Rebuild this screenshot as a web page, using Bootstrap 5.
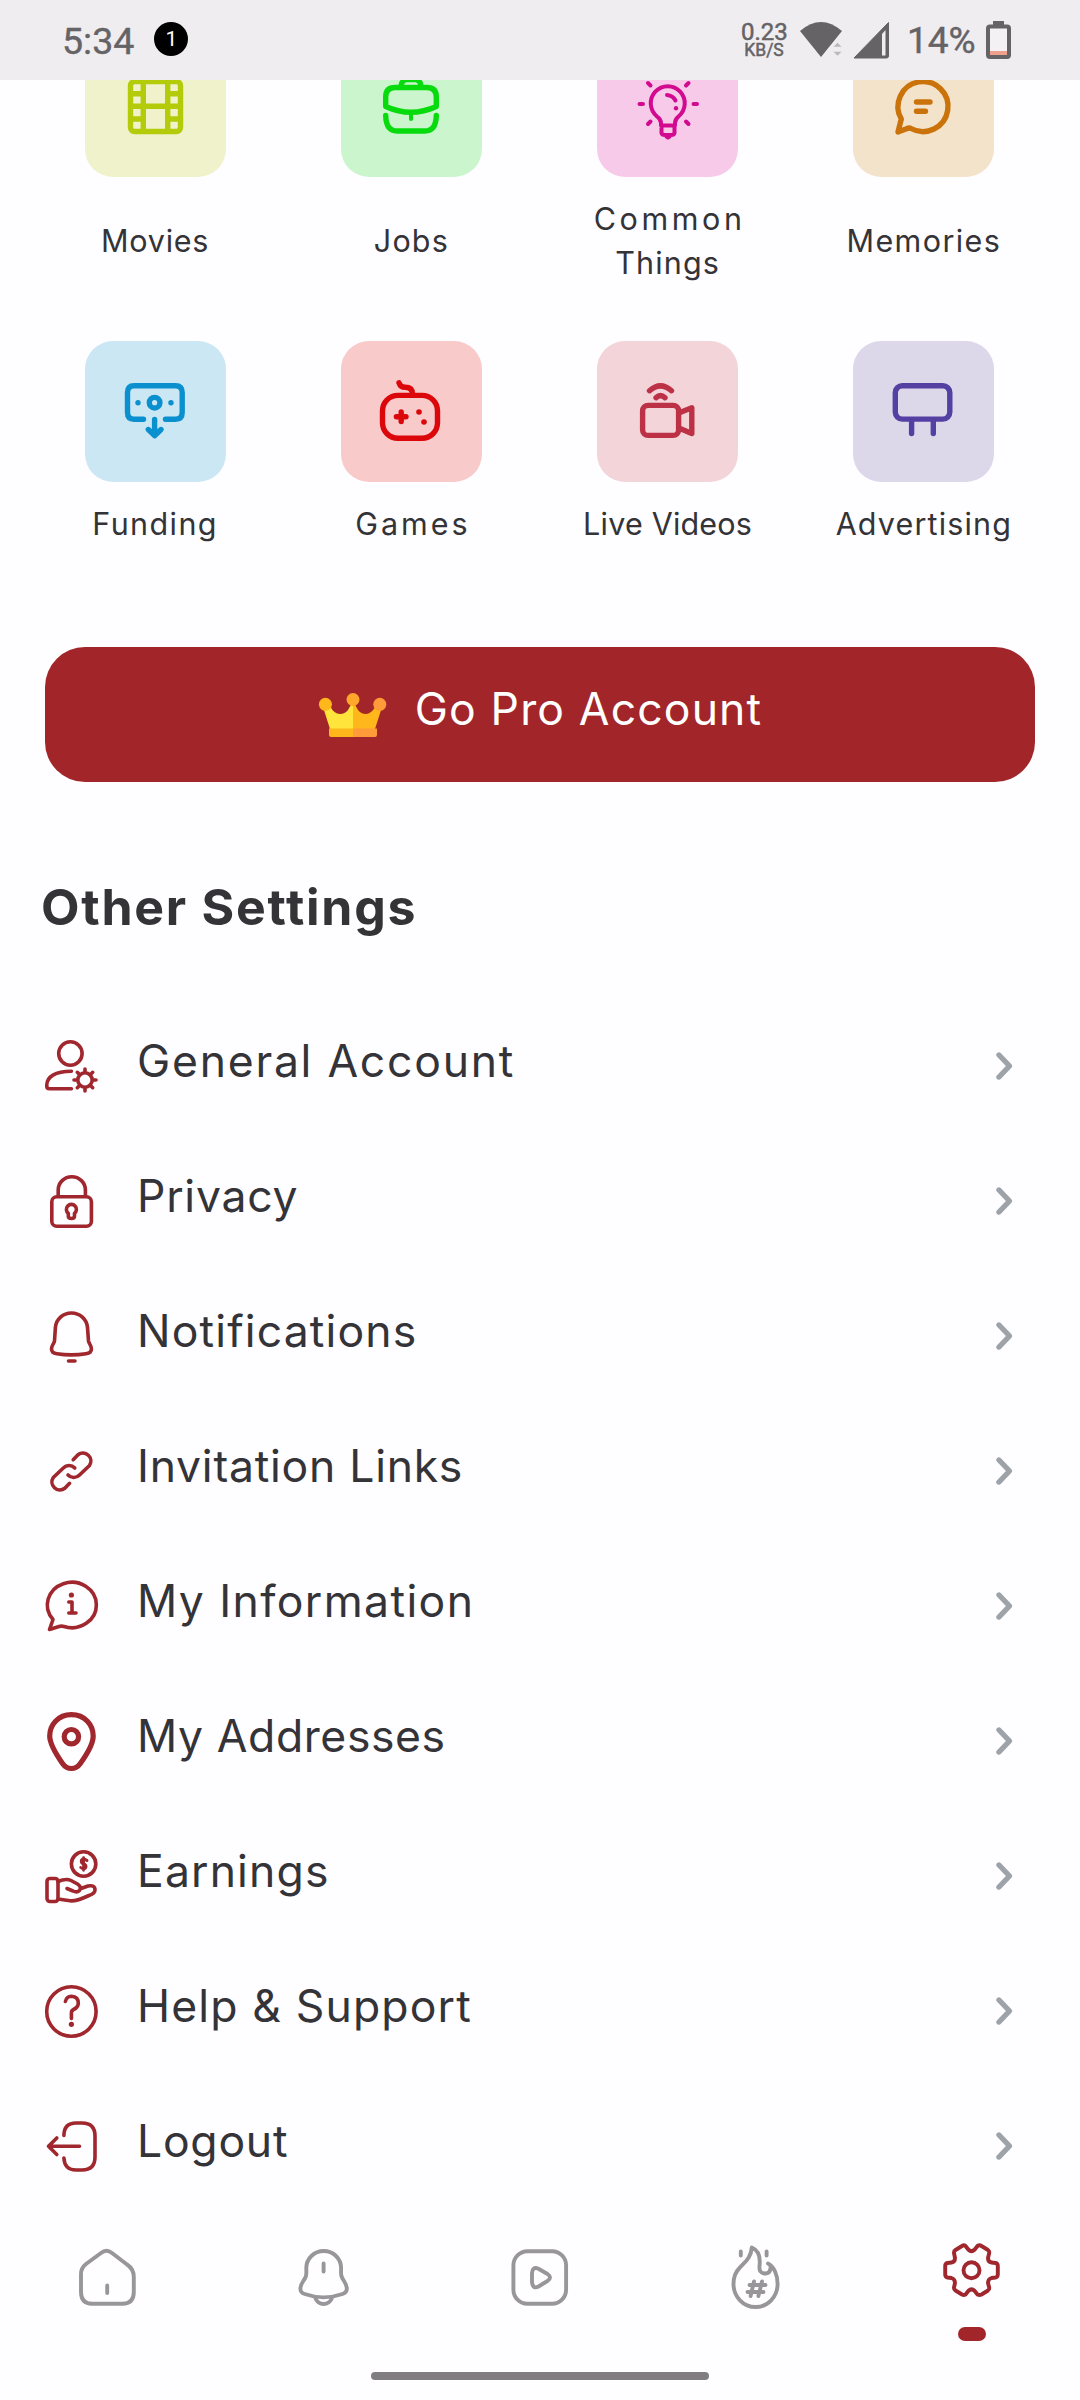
<!DOCTYPE html>
<html lang="en">
<head>
<meta charset="utf-8">
<meta name="viewport" content="width=device-width, initial-scale=1">
<title>Settings</title>
<link href="https://cdn.jsdelivr.net/npm/bootstrap@5.3.0/dist/css/bootstrap.min.css" rel="stylesheet">
<style>
body{background:#fefdff;color:#343337;font-family:Inter,"Noto Sans",sans-serif;}
.phone{width:1080px;height:2400px;overflow:hidden;}
svg{display:block;flex:none;overflow:visible;}
.ic{fill:none;stroke:currentColor;stroke-linecap:round;stroke-linejoin:round;}
.ic .dot{fill:currentColor;stroke:none;}
.statusbar{height:80px;background:#efedf0;color:#656366;font-family:Roboto,sans-serif;padding:0 69px 0 62px;z-index:2;flex:none;}
.clock{font-size:37.5px;line-height:80px;-webkit-text-stroke:.4px;padding-top:2px;}
.battery-text{width:67px;margin-left:15px;font-size:37px;white-space:nowrap;}
.battery{margin-left:12px;}
.notif{width:34px;height:34px;background:#000;color:#fff;font-size:21px;line-height:34px;margin:0 0 2px 20px;}
.netspeed{font-size:24px;line-height:20px;width:46px;margin-right:13px;-webkit-text-stroke:.5px;}
.netspeed small{font-size:17.5px;line-height:16px;}
.shortcuts{margin-top:-44px;padding:0 28px 0 27px;flex:none;}
.second-row{margin-top:56px;}
.tile{width:141px;height:141px;border-radius:28px;}
.tile .ic{stroke-width:5.4;}
.tile .thin{stroke-width:4;}
.movies{background:#eff2cb;color:#b3cb08;}
.jobs{background:#cbf6cd;color:#08db0d;}
.common{background:#f7cae9;color:#d20a90;}
.memories{background:#f4e3cb;color:#ca730a;}
.funding{background:#cce7f4;color:#0a90cf;}
.games{background:#f8caca;color:#db070b;}
.live{background:#f3d4d8;color:#bd3147;}
.ads{background:#dcd8ea;color:#543fa3;}
.caption{font-size:30.5px;line-height:44px;height:88px;margin-top:20px;white-space:nowrap;}
.caption.one{height:44px;}
.pro{height:135px;border-radius:40px;background:#a22529;color:#fff;margin:101px 45px 0;gap:28px;flex:none;}
.pro:hover{background:#a22529;color:#fff;}
.pro span{font-size:44.5px;line-height:60px;padding-bottom:12px;}
.heading{font-size:50px;line-height:60px;margin:95px 0 61px 41px;flex:none;font-weight:700;}
.setting{height:135px;padding:0 66px 0 41px;}
.setting .ic{stroke-width:3.6;color:#9f272d;}
.setting .bold-pin{stroke-width:5.2;}
.setting .chev{stroke-width:5.4;color:#9ea3a9;}
.setting span{font-size:44.5px;line-height:60px;padding:0 0 10px 36px;white-space:nowrap;}
.tabs{height:138px;padding-top:29px;color:#98969a;flex:none;}
.tabs .ic{stroke-width:3.9;}
.tabs .active{color:#9f272d;}
.pill{width:28px;height:14px;background:#a22529;margin-top:15px;}
.homebar{width:338px;height:8px;border-radius:4px;background:#807e81;margin-bottom:20px;flex:none;}
.k2{letter-spacing:.2px;}
.k6{letter-spacing:.6px;}
.k8{letter-spacing:.75px;}
.k11{letter-spacing:1.15px;}
.k14{letter-spacing:1.4px;}
.k17{letter-spacing:1.75px;}
.k30{letter-spacing:3px;margin-right:-3px;}
.k37{letter-spacing:3.6px;margin-right:-4px;}
</style>
<script src="https://cdn.jsdelivr.net/npm/bootstrap@5.3.0/dist/js/bootstrap.bundle.min.js"></script>
</head>
<body>
<div class="phone d-flex flex-column">

<header class="statusbar position-relative d-flex align-items-center">
  <span class="clock">5:34</span>
  <span class="notif rounded-circle text-center">1</span>
  <div class="netspeed ms-auto d-flex flex-column text-center"><span>0.23</span><small>KB/S</small></div>
  <svg width="44" height="38" viewBox="0 0 44 38"><path d="M0 10Q21-8 42 10L21 36Z" fill="#656366"/><path d="M33 26L37.500 21.500L42 26ZM33 30.500H42L37.500 35Z" fill="#bab8bb" stroke="#efedf0" stroke-width=".5"/></svg>
  <svg class="ms-2" width="40" height="38" viewBox="0 0 40 38"><path d="M2 37L36.500 1.500V35Q36.500 37 34.500 37Z" fill="#656366" stroke="#656366" stroke-width="1"/><path d="M30 13L33.500 9V34.500H30Z" fill="#efedf0"/></svg>
  <span class="clock battery-text">14%</span>
  <svg class="battery" width="25" height="38" viewBox="0 0 25 38"><path d="M7 0H18V5H7Z" fill="#656366"/><rect x="2" y="5.500" width="21" height="30.500" rx="2" fill="#f3f1f3" stroke="#656366" stroke-width="4"/><path d="M4 30H21V34H4Z" fill="#f0a08c"/></svg>
</header>

<section class="shortcuts">
  <div class="row g-0 text-center">
    <div class="col-3 d-flex flex-column align-items-center">
      <div class="tile movies"><svg class="ic" width="141" height="141"><rect x="45.500" y="45.500" width="50" height="50" rx="4"/><path d="M58.300 46V95M82.700 46V95M46 70.300H95M46 57.700H58M46 83H58M83 57.700H95M83 83H95"/></svg></div>
      <div class="caption d-flex align-items-center"><span class="k8">Movies</span></div>
    </div>
    <div class="col-3 d-flex flex-column align-items-center">
      <div class="tile jobs"><svg class="ic" width="141" height="141"><path d="M44.700 70.500V61Q44.700 51.500 54 51.500H86Q95.300 51.500 95.300 61V70.500Q70 82 44.700 70.500ZM60 50Q61 43.500 66 43.500H74Q79 43.500 80 50M44.700 79.500Q45 95 56 95H84Q95 95 95.300 79.500"/><path d="M70 77V83" stroke-width="4"/></svg></div>
      <div class="caption d-flex align-items-center"><span class="k11">Jobs</span></div>
    </div>
    <div class="col-3 d-flex flex-column align-items-center">
      <div class="tile common"><svg class="ic thin" width="141" height="141"><path d="M64 89.500V87Q64 83.500 60 80.500A17 17 0 1 1 81.500 80.500Q78 83.500 78 87V89.500ZM64.500 90V97Q65 99 68 99H74Q77 99 77.500 97V90M69.500 100.500L71 101.500L72.500 100.500M42.500 68H46M96.500 68H100M51 47L53.500 49.500M91.500 47L89 49.500M51 88L53.500 85.500M91.500 88L89 85.500M70 59Q76 59.500 78.500 64.500"/><circle class="dot" cx="79" cy="72.300" r="2.200"/></svg></div>
      <div class="caption"><span class="k37">Common</span><br><span class="k11">Things</span></div>
    </div>
    <div class="col-3 d-flex flex-column align-items-center">
      <div class="tile memories"><svg class="ic" width="141" height="141"><path d="M45 96L48.300 83A25 25 0 1 1 58 92.500Q56 91.500 53.500 92.700ZM63.500 66H77M63.500 75.300H72.500"/></svg></div>
      <div class="caption d-flex align-items-center"><span class="k14">Memories</span></div>
    </div>
  </div>
  <div class="row g-0 text-center second-row">
    <div class="col-3 d-flex flex-column align-items-center">
      <div class="tile funding"><svg class="ic" width="141" height="141"><path d="M58.500 78.200H49Q42.500 78.200 42.500 71.500V51.500Q42.500 44.700 49 44.700H90.500Q97.200 44.700 97.200 51.500V71.500Q97.200 78.200 90.500 78.200H80.500M69.600 78.500V94.500M63.300 88.500L69.600 94.700L76 88.500"/><circle cx="69.600" cy="61.700" r="5.300"/><circle class="dot" cx="53" cy="61.700" r="2.700"/><circle class="dot" cx="86" cy="61.700" r="2.700"/></svg></div>
      <div class="caption one"><span class="k14">Funding</span></div>
    </div>
    <div class="col-3 d-flex flex-column align-items-center">
      <div class="tile games"><svg class="ic" width="141" height="141"><rect x="41.500" y="54.400" width="55" height="42.900" rx="15.500"/><path d="M58 41.800Q59.500 46.300 64 46.300Q71.500 46.300 71.500 53M60.200 71V80.500M55.400 75.700H65"/><circle class="dot" cx="78" cy="71" r="2.800"/><circle class="dot" cx="83" cy="81" r="2.800"/></svg></div>
      <div class="caption one"><span class="k30">Games</span></div>
    </div>
    <div class="col-3 d-flex flex-column align-items-center">
      <div class="tile live"><svg class="ic" width="141" height="141"><rect x="45.600" y="64.400" width="36" height="30" rx="5.500"/><path d="M83 71.500L94.800 66.800V92.500L83 87.500M52.500 49.700Q63.500 40 74.500 49.700M59 56.700Q63.500 52.500 68 56.700"/></svg></div>
      <div class="caption one"><span class="k2">Live Videos</span></div>
    </div>
    <div class="col-3 d-flex flex-column align-items-center">
      <div class="tile ads"><svg class="ic" width="141" height="141"><rect x="42.300" y="44.700" width="54.500" height="33.400" rx="7"/><path d="M58.600 80V92.500M80.300 80V92.500"/></svg></div>
      <div class="caption one"><span class="k11">Advertising</span></div>
    </div>
  </div>
</section>

<button class="pro btn border-0 d-flex align-items-center justify-content-center">
  <svg width="69" height="46" viewBox="0 0 69 46"><path d="M5 15L12 37H35V9L30 18Q27 22 22 22Q16 22 12 14Z" fill="#ffe53b"/><path d="M64 15L57 37H35V9L40 18Q43 22 48 22Q53 22 58 14Z" fill="#ffb71b"/><path d="M11 36.500H35V45H13Q11 45 11 43Z" fill="#ffb71b"/><path d="M35 36.500H59V43Q59 45 57 45H35Z" fill="#ff9b38"/><circle cx="7.400" cy="12.300" r="6.500" fill="#ffb71b"/><circle cx="61.800" cy="12.300" r="6.500" fill="#ff9b38"/><circle cx="35" cy="7.500" r="6.500" fill="#ffa72a"/></svg>
  <span class="k11">Go Pro Account</span>
</button>

<h2 class="heading k17">Other Settings</h2>

<main class="settings">
  <div class="setting d-flex align-items-center"><svg class="ic" width="60" height="60"><ellipse cx="29.400" cy="17.500" rx="11.700" ry="11.700"/><path d="M30.400 35.300C14 35.300 5.800 41 5.800 49V50.500Q5.800 52.700 8.500 52.700H30.400"/><circle cx="44" cy="44" r="7.200"/><path d="M44 36V33M44 52V55M36 44H33M52 44H55M38.300 38.300L36.300 36.300M49.700 38.300L51.700 36.300M38.300 49.700L36.300 51.700M49.700 49.700L51.700 51.700"/></svg><span class="k17">General Account</span><svg class="ic chev ms-auto" width="18" height="30"><path d="M3 4L13.500 15L3 26"/></svg></div>
  <div class="setting d-flex align-items-center"><svg class="ic" width="60" height="60"><rect x="10.800" y="25.700" width="39.600" height="29.500" rx="5"/><path d="M17.200 25V19A13.600 13.300 0 0 1 44.400 19V25M27.300 42.300A5 5 0 1 1 33.500 42.300V45Q33.500 47.500 30.400 47.500Q27.300 47.500 27.300 45Z"/></svg><span class="k8">Privacy</span><svg class="ic chev ms-auto" width="18" height="30"><path d="M3 4L13.500 15L3 26"/></svg></div>
  <div class="setting d-flex align-items-center"><svg class="ic" width="60" height="60"><path d="M14.400 21.500A16.100 15.800 0 0 1 46.500 21.500L47.500 35C48 38 50.400 39 50.400 43Q50.400 47 45 47.700Q30.400 50 15.800 47.700Q10.500 47 10.500 43C10.500 39 13 38 13.500 35ZM27.500 55H34"/></svg><span class="k11">Notifications</span><svg class="ic chev ms-auto" width="18" height="30"><path d="M3 4L13.500 15L3 26"/></svg></div>
  <div class="setting d-flex align-items-center"><svg class="ic" width="60" height="60"><path d="M32.200 18.700L37 13.700A8 8 0 0 1 48.500 24.500L38.500 34A8 8 0 0 1 27 34M28.600 42.300L23.800 47.300A8 8 0 0 1 12.300 36.500L22.300 27A8 8 0 0 1 33.800 27"/></svg><span class="k8">Invitation Links</span><svg class="ic chev ms-auto" width="18" height="30"><path d="M3 4L13.500 15L3 26"/></svg></div>
  <div class="setting d-flex align-items-center"><svg class="ic" width="60" height="60"><path d="M8.500 53.500L12 43.500A24.500 22.700 0 1 1 23 50.500Q20.500 49.700 18 50.500ZM27.800 26H31V37M27.800 37H35"/><circle class="dot" cx="30.400" cy="19" r="2.600"/></svg><span class="k14">My Information</span><svg class="ic chev ms-auto" width="18" height="30"><path d="M3 4L13.500 15L3 26"/></svg></div>
  <div class="setting d-flex align-items-center"><svg class="ic bold-pin" width="60" height="60"><path d="M30.400 3.700C17 3.700 8.700 14 8.700 25C8.700 33 17 46 21.500 52.500Q25 57.500 30.400 57.500Q35.800 57.500 39.300 52.500C44 46 52.200 33 52.200 25C52.200 14 44 3.700 30.400 3.700Z"/><circle cx="30.400" cy="25.700" r="7.200"/></svg><span class="k6">My Addresses</span><svg class="ic chev ms-auto" width="18" height="30"><path d="M3 4L13.500 15L3 26"/></svg></div>
  <div class="setting d-flex align-items-center"><svg class="ic" width="60" height="60"><circle cx="42.600" cy="18" r="12.200"/><path d="M46 14.500Q42.600 11.800 40.500 14Q39.500 17 42.600 18Q46 19 44.700 21.700Q42.600 24 39.700 21.500M42.600 11.800V24.200" stroke-width="2.900"/><rect x="6" y="32.500" width="11" height="23" rx="3"/><path d="M17 35.500Q25 32 30 34.500L36.500 38Q41 41 38.500 44.500Q36 47 32 45L26 42.500M40 42.500L47 40Q54 38.500 54 44Q54 47.500 48 49.500Q35 55.500 29 54.800L17 53"/></svg><span class="k11">Earnings</span><svg class="ic chev ms-auto" width="18" height="30"><path d="M3 4L13.500 15L3 26"/></svg></div>
  <div class="setting d-flex align-items-center"><svg class="ic" width="60" height="60"><circle cx="30.400" cy="30.500" r="24.700"/><path d="M24.400 20.500Q25.500 15.200 30.400 15.200Q37.500 15.500 37.300 22.500Q37 26.500 32.500 28.500Q30.400 29.500 30.400 32V37.500"/><circle class="dot" cx="30.400" cy="43.300" r="2.600"/></svg><span class="k11">Help &amp; Support</span><svg class="ic chev ms-auto" width="18" height="30"><path d="M3 4L13.500 15L3 26"/></svg></div>
  <div class="setting d-flex align-items-center"><svg class="ic" width="60" height="60"><path d="M22.900 19.500Q23 7 35 7H41Q54 7 54 20V41Q54 54 41 54H35Q23.500 54 22.900 42M38.500 30.300H7.500M15.800 22L7.500 30.300L15.800 38.600"/></svg><span class="k8">Logout</span><svg class="ic chev ms-auto" width="18" height="30"><path d="M3 4L13.500 15L3 26"/></svg></div>
</main>

<nav class="tabs row g-0">
  <div class="col d-flex justify-content-center"><svg class="ic" width="70" height="70"><path d="M28 11Q33.400 6.500 39 11L54 22.500Q60.800 27 60.800 35V50Q60.800 61.700 49.500 61.700H19Q8 61.700 8 50V32Q8 26 13 22ZM34.200 43.500V51"/></svg></div>
  <div class="col d-flex justify-content-center"><svg class="ic" width="70" height="70"><path d="M17.300 26A17.400 17 0 0 1 52.100 26C52 32 51.500 34 55 39C58 43.500 60 50 53.500 52Q34.600 58.700 15.700 52C9.200 50 11.200 43.500 14.300 39C18 34 17.300 32 17.300 26ZM26.500 56.500Q29 62 34.600 62Q40.200 62 42.800 56.500M34.600 21.500V29.500"/></svg></div>
  <div class="col d-flex justify-content-center"><svg class="ic" width="70" height="70"><rect x="8.400" y="9.200" width="52.700" height="52.500" rx="14"/><path d="M27 31Q27.500 24.500 33 26.500L42.500 32Q47.500 35.500 42.500 39L33.500 44.500Q28 47.500 27 40.500Z"/></svg></div>
  <div class="col d-flex justify-content-center"><svg class="ic" width="70" height="70"><path d="M30.800 5.500C30 16 24 20 18.500 26C15 29.500 12.500 35 12.500 42A22 23 0 0 0 56.600 42C56.600 33 53 24.500 47 21.500C51 23 50.500 31 44.500 31.500C40 31.500 38 29 38.500 24C39.500 16 38 8.500 30.800 5.500ZM19.800 9.500V13.500M45.600 9.500V13.500M28.500 43H44.500M26.500 50H42.500M33 39.500L29.600 54M41 39.500L37.400 54"/></svg></div>
  <div class="col active d-flex flex-column align-items-center"><svg class="ic" width="70" height="70"><path d="M25 4Q27 2.700 28.500 4L31.500 7.800Q34.500 10.500 37.500 7.800L40.500 4Q42.500 2.700 44.500 4L51 8Q52.500 9 52.200 11L51 16Q51 20 54.500 20.500L58.500 21Q60.800 21.500 60.800 24V32.500Q60.800 35 58.500 35.500L54.500 36Q51 37 51 41L52.200 45.500Q52.500 47.500 51 48.500L44.500 52.500Q42.500 53.500 40.500 52.500L37.500 48.800Q34.500 46 31.500 48.800L28.500 52.500Q27 53.500 25 52.500L18.500 48.500Q16.800 47.500 17 45.500L18 41Q18 37 14.500 36L10.500 35.500Q8.200 35 8.200 32.500V24Q8.200 21.500 10.500 21L14.500 20.500Q18 20 18 16L17 11Q16.800 9 18.500 8Z"/><circle cx="34.500" cy="28.300" r="8"/></svg><div class="pill rounded-pill"></div></div>
</nav>
<div class="homebar mx-auto mt-auto"></div>
</div>
</body>
</html>
